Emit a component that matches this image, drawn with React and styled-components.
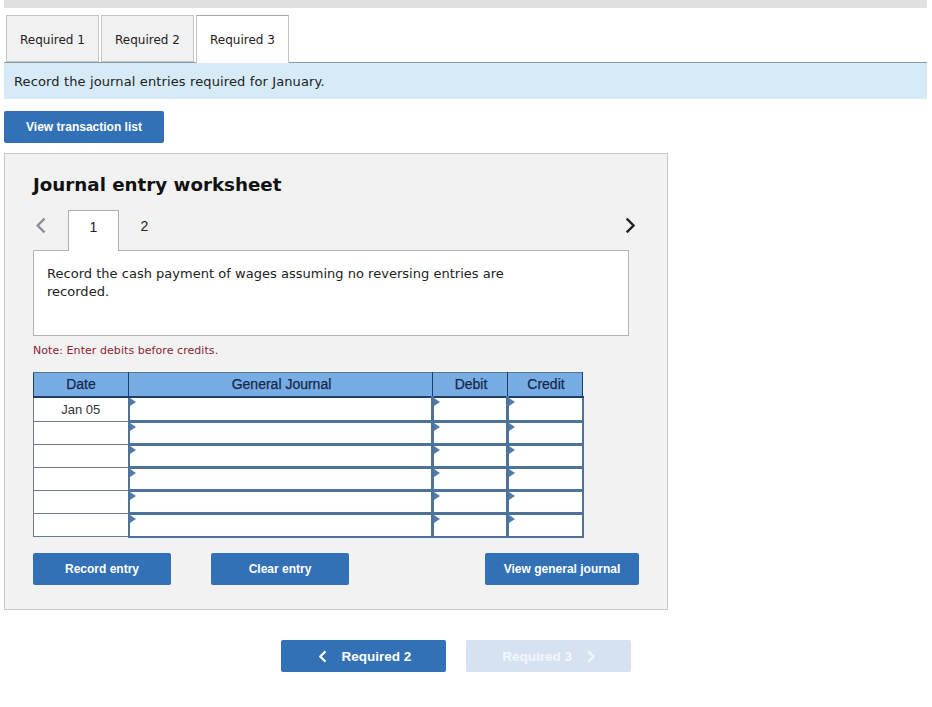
import React from "react";
import styled, { createGlobalStyle } from "styled-components";

const GlobalStyle = createGlobalStyle`
  html, body {
    margin: 0;
    padding: 0;
    background: #fff;
  }
  body {
    font-family: "DejaVu Sans", Verdana, sans-serif;
    color: #222;
  }
`;

const Page = styled.div`
  width: 932px;
  height: 707px;
  padding-left: 4px;
  box-sizing: border-box;
  overflow: hidden;
`;

const TopBar = styled.div`
  width: 923px;
  height: 8px;
  background: #e0e0e0;
`;

const TabRow = styled.div`
  display: flex;
  gap: 2px;
  width: 923px;
  height: 48px;
  margin-top: 7px;
  padding-left: 2px;
  box-sizing: border-box;
  border-bottom: 1px solid #8c9aa8;
`;

const Tab = styled.div`
  width: 93px;
  height: ${(p) => (p.$active ? "48px" : "47px")};
  box-sizing: border-box;
  display: flex;
  align-items: center;
  justify-content: center;
  padding-top: ${(p) => (p.$active ? "0" : "2px")};
  font-size: 12px;
  color: #222;
  background: ${(p) => (p.$active ? "#fff" : "#f2f2f2")};
  border: 1px solid #c4c4c4;
  border-bottom: ${(p) => (p.$active ? "none" : "1px solid #c4c4c4")};
  border-top-color: ${(p) => (p.$active ? "#a8a8a8" : "#c4c4c4")};
  position: relative;
`;

const Banner = styled.div`
  width: 923px;
  height: 36px;
  box-sizing: border-box;
  padding: 0 10px;
  display: flex;
  align-items: center;
  background: #d6eaf8;
  font-size: 13px;
  letter-spacing: 0.125px;
  color: #222;
`;

const Button = styled.button`
  display: flex;
  align-items: center;
  justify-content: center;
  gap: 15px;
  width: ${(p) => p.$width}px;
  height: 32px;
  padding: 0;
  border: none;
  border-radius: 2px;
  background: ${(p) => (p.$disabled ? "#d6e2f1" : "#3371b7")};
  color: ${(p) => (p.$disabled ? "#f3f6fb" : "#fff")};
  font-family: "Liberation Sans", Arial, sans-serif;
  font-weight: bold;
  font-size: ${(p) => p.$size || 12}px;
`;

const TransactionButton = styled(Button)`
  margin-top: 12px;
`;

const PrevPageButton = styled(Button)`
  padding-left: 3px;
`;

const Panel = styled.div`
  width: 664px;
  height: 457px;
  margin-top: 10px;
  padding: 0 28px;
  box-sizing: border-box;
  background: #f2f2f2;
  border: 1px solid #c6c6c6;
`;

const Title = styled.h2`
  margin: 19px 0 0;
  height: 24px;
  line-height: 24px;
  font-size: 18.25px;
  font-weight: bold;
  color: #111;
`;

const EntryTabs = styled.div`
  display: flex;
  align-items: stretch;
  width: 606px;
  height: 40px;
  margin-top: 13px;
  position: relative;
`;

const Chevron = styled.svg`
  display: block;
  fill: none;
  stroke: ${(p) => p.$color};
  stroke-width: ${(p) => p.$weight || 2.8};
`;

const PrevSlot = styled.div`
  width: 35px;
  padding-left: 3px;
  padding-top: 7px;
  box-sizing: border-box;
  display: flex;
  align-items: flex-start;
`;

const NextSlot = styled.div`
  margin-left: auto;
  padding-top: 7px;
  padding-right: 4px;
`;

const EntryTab = styled.div`
  width: 51px;
  height: ${(p) => (p.$active ? "41px" : "40px")};
  box-sizing: border-box;
  display: flex;
  align-items: center;
  justify-content: center;
  padding-bottom: 8px;
  font-family: "Liberation Sans", Arial, sans-serif;
  font-size: 14px;
  color: #222;
  background: ${(p) => (p.$active ? "#fff" : "transparent")};
  border: ${(p) => (p.$active ? "1px solid #b0b0b0" : "none")};
  border-bottom: none;
  position: relative;
  z-index: 1;
`;

const EntryBox = styled.div`
  width: 596px;
  height: 86px;
  box-sizing: border-box;
  padding: 14px 13px;
  background: #fff;
  border: 1px solid #b4b4b4;
  font-size: 13px;
  line-height: 18px;
  letter-spacing: 0.02px;
  color: #222;
`;

const EntryText = styled.div`
  width: 480px;
`;

const Note = styled.div`
  margin-top: 8px;
  height: 14px;
  line-height: 14px;
  font-size: 11px;
  letter-spacing: 0.06px;
  color: #8c2232;
`;

const Sheet = styled.table`
  margin-top: 14px;
  width: 549px;
  table-layout: fixed;
  border-collapse: collapse;
  font-family: "Liberation Sans", Arial, sans-serif;
  font-size: 13px;
`;

const HeadCell = styled.th`
  height: 24px;
  padding: 0 0 0 ${(p) => (p.$nudge ? "2px" : "0")};
  box-sizing: border-box;
  background: #78ace5;
  color: #14284a;
  font-weight: normal;
  font-size: 14px;
  -webkit-text-stroke: 0.25px #14284a;
  border: 1px solid #1f3f66;
  border-top-color: #5f7488;
  border-bottom-width: 2px;
`;

const DateCell = styled.td`
  height: ${(p) => (p.$first ? "25px" : "23px")};
  padding: 0;
  box-sizing: border-box;
  text-align: center;
  background: #fff;
  color: #333;
  border: 1px solid #6f7a84;
`;

const EntryCell = styled.td`
  padding: 0;
  box-sizing: border-box;
  background: #fff;
  border: 3px solid #4f7298;
  border-top-width: ${(p) => (p.$first ? "1px" : "3px")};
  border-bottom-width: ${(p) => (p.$last ? "2px" : "3px")};
  border-left-width: ${(p) => (p.$amount ? "3px" : "2px")};
  border-right-width: 2px;
  position: relative;
  &::before {
    content: "";
    position: absolute;
    left: 0;
    top: 0;
    border-left: 6px solid #4f7cab;
    border-top: 4px solid transparent;
    border-bottom: 4px solid transparent;
  }
`;

const Actions = styled.div`
  display: flex;
  width: 606px;
  margin-top: 15px;
  gap: 40px;
`;

const PushedButton = styled(Button)`
  margin-left: 96px;
`;

const BottomNav = styled.div`
  display: flex;
  gap: 20px;
  margin-top: 30px;
  padding-left: 277px;
`;

const rows = ["Jan 05", "", "", "", "", ""];

function LeftChevron({ color, size = 17, weight }) {
  return (
    <Chevron $color={color} $weight={weight} width={size * 0.6} height={size} viewBox="0 0 12 20">
      <path d="M10 2 L2 10 L10 18" />
    </Chevron>
  );
}

function RightChevron({ color, size = 17, weight }) {
  return (
    <Chevron $color={color} $weight={weight} width={size * 0.6} height={size} viewBox="0 0 12 20">
      <path d="M2 2 L10 10 L2 18" />
    </Chevron>
  );
}

export default function App() {
  return (
    <Page>
      <GlobalStyle />
      <TopBar />
      <TabRow>
        <Tab>Required 1</Tab>
        <Tab>Required 2</Tab>
        <Tab $active>Required 3</Tab>
      </TabRow>
      <Banner>Record the journal entries required for January.</Banner>
      <TransactionButton $width={160}>View transaction list</TransactionButton>
      <Panel>
        <Title>Journal entry worksheet</Title>
        <EntryTabs>
          <PrevSlot>
            <LeftChevron color="#8a8f96" />
          </PrevSlot>
          <EntryTab $active>1</EntryTab>
          <EntryTab>2</EntryTab>
          <NextSlot>
            <RightChevron color="#222" />
          </NextSlot>
        </EntryTabs>
        <EntryBox>
          <EntryText>Record the cash payment of wages assuming no reversing entries are recorded.</EntryText>
        </EntryBox>
        <Note>Note: Enter debits before credits.</Note>
        <Sheet>
          <colgroup>
            <col width="95" />
            <col width="304" />
            <col width="75" />
            <col width="75" />
          </colgroup>
          <thead>
            <tr>
              <HeadCell>Date</HeadCell>
              <HeadCell $nudge>General Journal</HeadCell>
              <HeadCell $nudge>Debit</HeadCell>
              <HeadCell $nudge>Credit</HeadCell>
            </tr>
          </thead>
          <tbody>
            {rows.map((date, index) => (
              <tr key={index}>
                <DateCell $first={index === 0}>{date}</DateCell>
                <EntryCell $first={index === 0} $last={index === rows.length - 1} />
                <EntryCell $amount $first={index === 0} $last={index === rows.length - 1} />
                <EntryCell $amount $first={index === 0} $last={index === rows.length - 1} />
              </tr>
            ))}
          </tbody>
        </Sheet>
        <Actions>
          <Button $width={138}>Record entry</Button>
          <Button $width={138}>Clear entry</Button>
          <PushedButton $width={154}>View general journal</PushedButton>
        </Actions>
      </Panel>
      <BottomNav>
        <PrevPageButton $width={165} $size={13.5}>
          <LeftChevron color="#fff" size={13} weight={3.4} />
          Required 2
        </PrevPageButton>
        <Button $width={165} $size={13.5} $disabled>
          Required 3
          <RightChevron color="#f3f6fb" size={13} weight={3.4} />
        </Button>
      </BottomNav>
    </Page>
  );
}
